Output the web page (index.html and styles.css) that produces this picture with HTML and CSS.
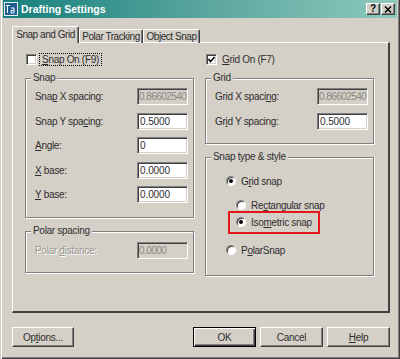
FILE: index.html
```html
<!DOCTYPE html>
<html lang="en">
<head>
    <meta charset="UTF-8">
    <title>Drafting Settings</title>
    <link rel="stylesheet" href="styles.css">
</head>
<body>

<div class="window">
    <div class="titlebar">
        <svg class="app-icon" width="14" height="14" viewBox="0 0 14 14">
            <rect x="0" y="0" width="14" height="14" fill="#e8f0f0"/>
            <rect x="1" y="1" width="12" height="12" fill="#1f5f95"/>
            <rect x="2" y="3" width="4" height="1" fill="#fff"/>
            <rect x="3" y="3" width="1" height="8" fill="#fff"/>
            <path d="M7 6 H10 V11 H7 V8.5 H10" fill="none" stroke="#fff" stroke-width="1"/>
        </svg>
        <span class="title">Drafting Settings</span>
        <div class="title-buttons">
            <span class="tbtn">?</span>
            <span class="tbtn">
                <svg width="8" height="7" viewBox="0 0 8 7"><path d="M1 0.5 L7 6.5 M7 0.5 L1 6.5" stroke="#000" stroke-width="1.5"/></svg>
            </span>
        </div>
    </div>

    <div class="body">
        <div class="tabs">
            <div class="tab active">Snap and Grid</div>
            <div class="tab polar-tab">Polar Tracking</div>
            <div class="tab osnap-tab">Object Snap</div>
        </div>

        <div class="panel">
            <div class="col">
                <div class="check">
                    <span class="box"></span>
                    <span class="focus"><u>S</u>nap On (F9)</span>
                </div>

                <div class="group snap-group">
                    <div class="group-title">Snap</div>
                    <div class="fields">
                        <div class="field"><span>Sna<u>p</u> X spacing:</span><span class="input disabled">0.86602540</span></div>
                        <div class="field"><span>Snap Y spa<u>c</u>ing:</span><span class="input">0.5000</span></div>
                        <div class="field"><span><u>A</u>ngle:</span><span class="input">0</span></div>
                        <div class="field"><span><u>X</u> base:</span><span class="input">0.0000</span></div>
                        <div class="field"><span><u>Y</u> base:</span><span class="input">0.0000</span></div>
                    </div>
                </div>

                <div class="group polar-group">
                    <div class="group-title">Polar spacing</div>
                    <div class="fields">
                        <div class="field"><span class="off">Polar <u>d</u>istance:</span><span class="input disabled">0.0000</span></div>
                    </div>
                </div>
            </div>

            <div class="col">
                <div class="check">
                    <span class="box">
                        <svg width="7" height="7" viewBox="0 0 7 7"><path d="M0.5 3 L2.5 5.5 L6.5 1" fill="none" stroke="#000" stroke-width="1.6"/></svg>
                    </span>
                    <span class="nofocus"><u>G</u>rid On (F7)</span>
                </div>

                <div class="group grid-group">
                    <div class="group-title">Grid</div>
                    <div class="fields">
                        <div class="field"><span>Grid X spaci<u>n</u>g:</span><span class="input disabled">0.86602540</span></div>
                        <div class="field"><span>Gr<u>i</u>d Y spacing:</span><span class="input">0.5000</span></div>
                    </div>
                </div>

                <div class="group style-group">
                    <div class="group-title">Snap type &amp; style</div>
                    <div class="radios">
                        <div class="radio-row"><span class="radio on"></span><span>G<u>r</u>id snap</span></div>
                        <div class="sub">
                            <div class="radio-row"><span class="radio"></span><span>Re<u>c</u>tangular snap</span></div>
                            <div class="radio-row marked"><span class="radio on"></span><span>Iso<u>m</u>etric snap</span></div>
                        </div>
                        <div class="radio-row"><span class="radio"></span><span>P<u>o</u>larSnap</span></div>
                    </div>
                </div>
            </div>
        </div>

        <div class="buttons">
            <button class="btn options">Op<u>t</u>ions...</button>
            <div class="right-buttons">
                <button class="btn default">OK</button>
                <button class="btn">Cancel</button>
                <button class="btn"><u>H</u>elp</button>
            </div>
        </div>
    </div>
</div>

</body>
</html>
```

FILE: styles.css
```css
body {
    margin: 0;
    background: #d4d0c8;
    font-family: "Liberation Sans", Arial, sans-serif;
    font-size: 10px;
    letter-spacing: -0.3px;
    color: #2e2e2e;
}

u {
    text-decoration: underline;
    text-underline-offset: 1px;
}

.window {
    width: 400px;
    height: 359px;
    box-sizing: border-box;
    padding: 0 3px 3px 3px;
    background: #d4d0c8;
    box-shadow: inset 1px 0 #d4d0c8, inset 2px 0 #fff, inset -1px -1px #404040, inset -2px -2px #808080;
}

/* title bar */
.titlebar {
    height: 18px;
    display: flex;
    align-items: center;
    padding: 0 2px 0 1px;
    background: linear-gradient(90deg, #16807c, #5fa8a0 55%, #8ccabd);
}
.app-icon {
    display: block;
    margin-right: 3px;
}
.title {
    color: #fff;
    font-weight: bold;
    font-size: 10.5px;
    letter-spacing: 0;
    flex: 1;
}
.title-buttons {
    display: flex;
    gap: 1px;
}
.tbtn {
    width: 14px;
    height: 12px;
    box-sizing: border-box;
    display: flex;
    align-items: center;
    justify-content: center;
    background: #d4d0c8;
    border: 1px solid;
    border-color: #fff #404040 #404040 #fff;
    box-shadow: inset -1px -1px #808080;
    font-weight: bold;
    font-size: 10px;
    line-height: 10px;
    color: #000;
}

.body {
    padding: 8px 7px 0 9px;
}

/* tabs */
.tabs {
    display: flex;
    align-items: flex-end;
    height: 17px;
}
.tab {
    height: 14px;
    box-sizing: border-box;
    border: 1px solid;
    border-color: #fff #404040 transparent #fff;
    border-bottom: none;
    box-shadow: inset -1px 0 #808080;
    text-align: center;
    line-height: 13px;
    white-space: nowrap;
    letter-spacing: -0.45px;
    border-radius: 2px 2px 0 0;
}
.tab.active {
    width: 67px;
    height: 17px;
    line-height: 15px;
    position: relative;
    z-index: 1;
    background: #d4d0c8;
}
.polar-tab {
    width: 64px;
}
.osnap-tab {
    width: 57px;
}

.panel {
    height: 271px;
    box-sizing: border-box;
    display: flex;
    gap: 11px;
    padding: 10px 14px 0 12px;
    border: 1px solid;
    border-color: #fff #404040 #404040 #fff;
    border-right-width: 2px;
    border-bottom-width: 2px;
    margin-top: -1px;
}

.col {
    width: 169px;
    display: flex;
    flex-direction: column;
}

/* checkboxes */
.check {
    height: 12px;
    display: flex;
    align-items: center;
    gap: 3px;
    margin-left: 1px;
    white-space: nowrap;
}
.box {
    width: 11px;
    height: 11px;
    box-sizing: border-box;
    background: #fff;
    border: 1px solid;
    border-color: #808080 #fff #fff #808080;
    box-shadow: inset 1px 1px #404040, inset -1px -1px #d4d0c8;
    display: flex;
    align-items: center;
    justify-content: center;
}
.box svg {
    display: block;
}
.focus {
    outline: 1px dotted #000;
    padding: 0 2px;
    line-height: 11px;
}
.nofocus {
    padding: 0 2px;
}

/* group boxes */
.group {
    margin-top: 13px;
    border: 1px solid #808080;
    box-shadow: inset 1px 1px #fff, 1px 1px #fff;
    display: flex;
    flex-direction: column;
}
.group-title {
    align-self: flex-start;
    margin: -7px 0 -5px 5px;
    padding: 0 2px;
    line-height: 12px;
    background: #d4d0c8;
    white-space: nowrap;
}

.fields {
    display: flex;
    flex-direction: column;
    padding: 9px 5px 14px 9px;
}
.snap-group .fields {
    gap: 7.5px;
}
.grid-group .fields {
    gap: 8px;
    padding-bottom: 13px;
}
.polar-group .fields {
    padding-top: 10px;
    padding-bottom: 13px;
}
.field {
    display: flex;
    justify-content: space-between;
    align-items: center;
    height: 17px;
    white-space: nowrap;
}
.input {
    width: 51px;
    height: 17px;
    box-sizing: border-box;
    padding: 0 0 0 2px;
    background: #fff;
    border: 1px solid;
    border-color: #808080 #fff #fff #808080;
    box-shadow: inset 1px 1px #404040, inset -1px -1px #d4d0c8;
    line-height: 15px;
    letter-spacing: -0.1px;
    overflow: hidden;
}
.input.disabled {
    background: #d4d0c8;
    color: #8a8780;
    padding-left: 1px;
    letter-spacing: -0.55px;
}
.off {
    color: #9a968e;
    text-shadow: 1px 1px #fff;
}

/* radio buttons */
.radios {
    display: flex;
    flex-direction: column;
    gap: 12px;
    padding: 17px 0 19px 20px;
}
.sub {
    display: flex;
    flex-direction: column;
    gap: 5px;
    padding-left: 10px;
}
.radio-row {
    height: 12px;
    display: flex;
    align-items: center;
    gap: 5px;
    white-space: nowrap;
}
.radios > .radio-row:last-child {
    margin-top: 4px;
}
.radio {
    width: 10px;
    height: 10px;
    box-sizing: border-box;
    border-radius: 50%;
    background: #fff;
    border: 1px solid;
    border-color: #808080 #fff #fff #808080;
    box-shadow: inset 1px 1px #404040;
    display: flex;
    align-items: center;
    justify-content: center;
}
.radio.on::after {
    content: "";
    width: 4px;
    height: 4px;
    border-radius: 50%;
    background: #000;
}
.marked {
    align-self: flex-start;
    border: 2px solid #e8141c;
    padding: 3px 6px 4px 6px;
    margin: -5px -8px -6px -8px;
}

/* bottom buttons */
.buttons {
    display: flex;
    justify-content: space-between;
    margin-top: 14px;
}
.right-buttons {
    display: flex;
    gap: 4px;
}
.btn {
    width: 63px;
    height: 20px;
    box-sizing: border-box;
    margin: 0;
    padding: 0;
    font: inherit;
    letter-spacing: inherit;
    color: #2e2e2e;
    background: #d4d0c8;
    border: 1px solid;
    border-color: #fff #404040 #404040 #fff;
    box-shadow: inset -1px -1px #808080;
}
.btn.options {
    width: 62px;
}
.btn.default {
    border: 1px solid #000;
    box-shadow: inset 1px 1px #fff, inset -1px -1px #404040, inset -2px -2px #808080;
}
```
